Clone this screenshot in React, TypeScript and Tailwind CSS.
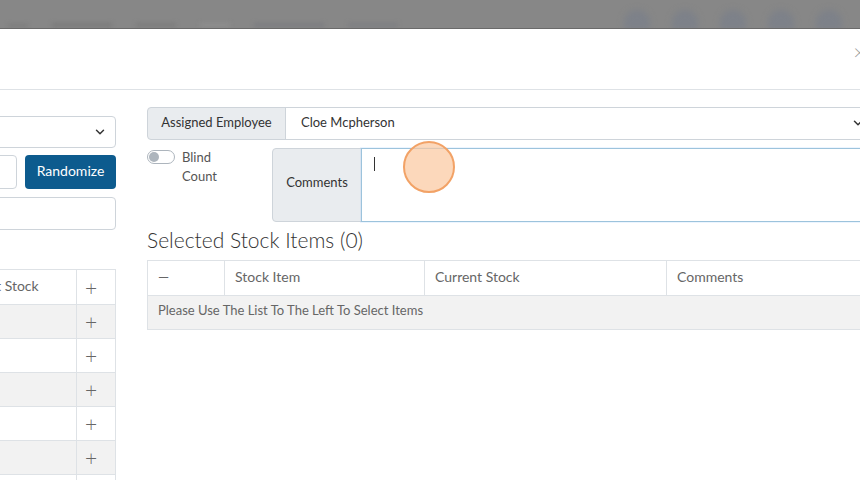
import { ChevronDown } from 'lucide-react'

const font = { fontFamily: 'Lato, "Open Sans", Arial, sans-serif' }

const leftRows = [0, 1, 2, 3, 4, 5]

function TopBackdrop() {
  return (
    <div className="relative h-[29px] shrink-0 overflow-hidden border-b border-[#6a6a6a] bg-[#878787]">
      <div className="absolute left-0 right-0 top-[23px] flex items-end gap-6 pl-2 blur-[2px]">
        <div className="h-[3px] w-[20px] bg-[#7b7b7b]" />
        <div className="h-[4px] w-[60px] bg-[#7a7a7a]" />
        <div className="h-[4px] w-[40px] bg-[#7c7c7c]" />
        <div className="h-[4px] w-[30px] bg-[#8e8e8e]" />
        <div className="h-[4px] w-[70px] bg-[#7b7c80]" />
        <div className="h-[4px] w-[50px] bg-[#7d7e82]" />
      </div>
      <div className="absolute right-[18px] top-[10px] flex gap-[22px] blur-[3px]">
        {[0, 1, 2, 3, 4].map((i) => (
          <div key={i} className="h-[20px] w-[26px] rounded-t-full bg-[#7d8189]" />
        ))}
      </div>
    </div>
  )
}

function LeftColumn() {
  return (
    <div className="-ml-[200px] mt-[26px] flex w-[316px] shrink-0 flex-col">
      <div className="flex h-[32px] items-center justify-end rounded border border-[#ced4da] pr-2">
        <ChevronDown size={14} strokeWidth={2.5} className="text-[#333]" />
      </div>
      <div className="mt-[7px] flex gap-[8px]">
        <div className="h-[34px] flex-1 rounded border border-[#ced4da]" />
        <button className="h-[34px] w-[91px] rounded bg-[#0d5b8e] pb-[3px] text-[14px] text-white">Randomize</button>
      </div>
      <div className="mt-[8px] h-[33px] rounded border border-[#ced4da]" />
      <table className="mt-[39px] w-full border-collapse text-[14px] text-[#666]">
        <thead>
          <tr className="h-[35px]">
            <td className="w-[143px] border border-[#dee2e6] px-2">Stock Item</td>
            <td className="w-[133px] border border-[#dee2e6] pl-[10px] pb-[3px]">Current Stock</td>
            <td className="border border-[#dee2e6] pr-[10px] text-center text-[21px] font-light leading-none text-[#666]">+</td>
          </tr>
        </thead>
        <tbody>
          {leftRows.map((i) => (
            <tr key={i} className={i % 2 === 0 ? 'h-[34px] bg-[#f2f2f2]' : 'h-[34px] bg-white'}>
              <td className="border border-[#dee2e6]" />
              <td className="border border-[#dee2e6]" />
              <td className="border border-[#dee2e6] pr-[10px] text-center text-[21px] font-light leading-none text-[#666]">+</td>
            </tr>
          ))}
        </tbody>
      </table>
    </div>
  )
}

function RightColumn() {
  return (
    <div className="relative ml-[31px] mt-[17px] flex w-[725px] shrink-0 flex-col text-[13px] text-[#333]">
      <div className="flex h-[33px]">
        <div className="flex w-[139px] shrink-0 items-center justify-center whitespace-nowrap rounded-l border border-[#ced4da] bg-[#e9ecef] pb-[2px]">
          Assigned Employee
        </div>
        <div className="-ml-px flex flex-1 items-center justify-between whitespace-nowrap border border-[#ced4da] pl-[15px] pr-[6px] pb-[2px]">
          <span>Cloe Mcpherson</span>
          <ChevronDown size={14} strokeWidth={2.5} className="text-[#333]" />
        </div>
      </div>
      <div className="mt-[8px] flex">
        <div className="flex w-[125px] shrink-0 items-start gap-[7px]">
          <div className="mt-[2px] flex h-[14px] w-[28px] items-center rounded-full border border-[#adb5bd] px-[1px]">
            <div className="h-[10px] w-[10px] rounded-full bg-[#adb5bd]" />
          </div>
          <div className="leading-[19px] text-[#555]">
            Blind
            <br />
            Count
          </div>
        </div>
        <div className="flex h-[74px] flex-1">
          <div className="flex w-[90px] shrink-0 items-center justify-center rounded-l border border-[#ced4da] bg-[#e9ecef] pb-[4px]">
            Comments
          </div>
          <div className="-ml-px flex-1 border border-[#9cc3dc] bg-white pl-[12px] pt-[8px] shadow-[0_0_0_1px_rgba(128,189,255,0.15)]">
            <div className="h-[14px] w-px bg-[#333]" />
          </div>
        </div>
      </div>
      <h2 className="mt-[6px] whitespace-nowrap text-[21px] font-light leading-[24px] text-[#333]">Selected Stock Items (0)</h2>
      <table className="mt-[8px] w-full border-collapse text-[14px] text-[#666]">
        <thead>
          <tr className="h-[35px]">
            <td className="w-[77px] border border-[#dee2e6] pl-[10px] pb-[3px] text-[#666]">—</td>
            <td className="w-[200px] border border-[#dee2e6] pl-[10px] pb-[3px]">Stock Item</td>
            <td className="w-[242px] border border-[#dee2e6] pl-[10px] pb-[3px]">Current Stock</td>
            <td className="border border-[#dee2e6] pl-[10px] pb-[3px]">Comments</td>
          </tr>
        </thead>
        <tbody>
          <tr className="h-[34px] bg-[#f2f2f2]">
            <td colSpan={4} className="border border-[#dee2e6] pl-[10px] pb-[3px] text-[13px]">
              Please Use The List To The Left To Select Items
            </td>
          </tr>
        </tbody>
      </table>
      <div className="absolute left-[256px] top-[34px] h-[52px] w-[52px] rounded-full border-2 border-[#f2a266] bg-[#fbc79e]/70" />
    </div>
  )
}

export default function App() {
  return (
    <div className="flex h-[480px] w-[860px] flex-col overflow-hidden bg-[#878787]" style={font}>
      <TopBackdrop />
      <div className="flex flex-1 flex-col overflow-hidden bg-white">
        <div className="flex h-[61px] shrink-0 items-start justify-end border-b border-[#dee2e6] pt-[12px]">
          <span className="-mr-[6px] text-[22px] font-light leading-none text-[#999]">×</span>
        </div>
        <div className="flex">
          <LeftColumn />
          <RightColumn />
        </div>
      </div>
    </div>
  )
}
